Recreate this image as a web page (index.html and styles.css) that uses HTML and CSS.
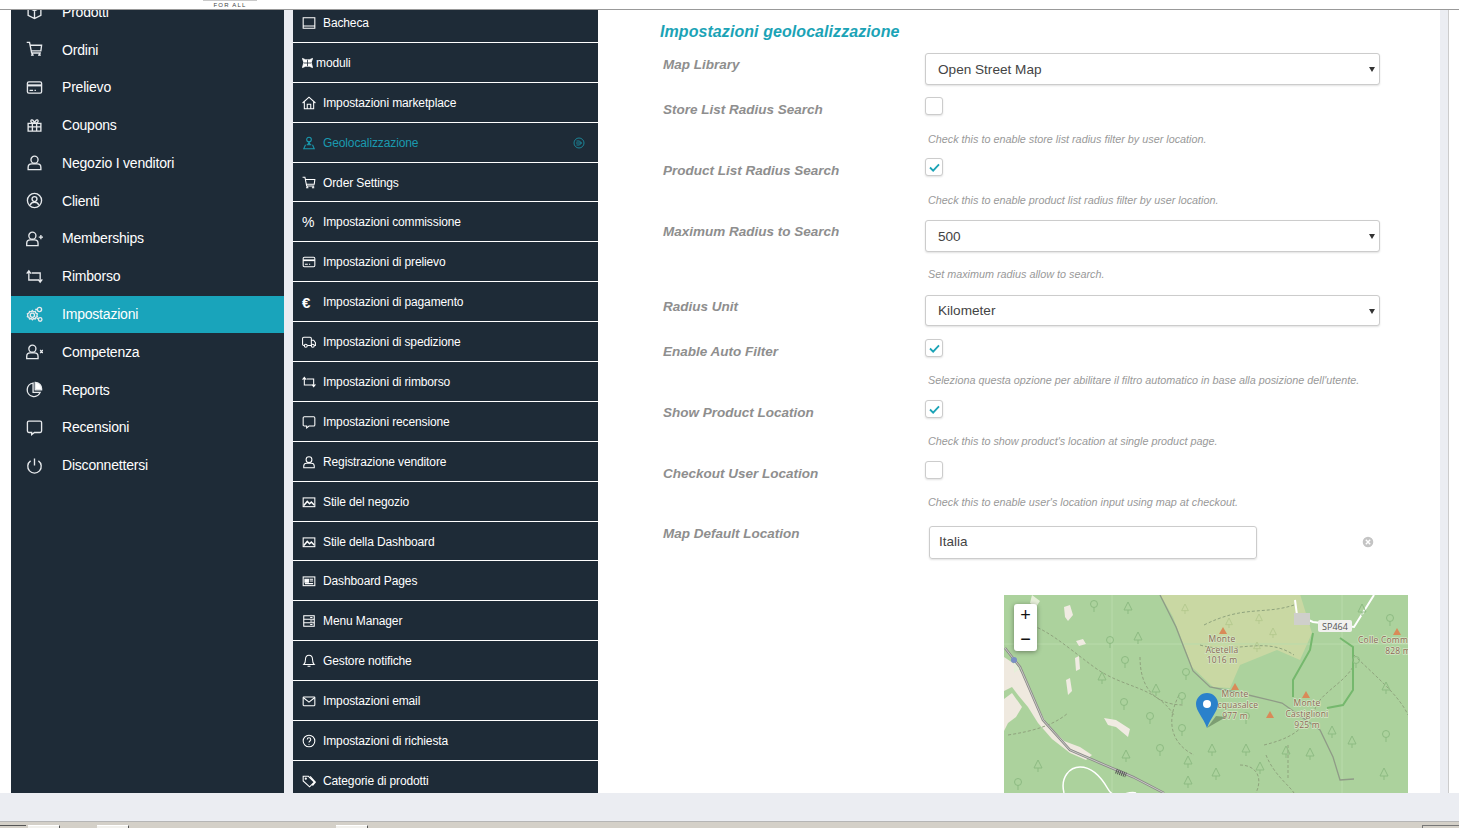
FILE: index.html
```html
<!DOCTYPE html>
<html lang="it">
<head>
  <meta charset="UTF-8" />
  <title>Impostazioni geolocalizzazione</title>
  <link rel="stylesheet" href="styles.css">
</head>
<body>

  <svg class="icon-defs" width="0" height="0">
    <defs>
      <symbol id="i-box" viewBox="0 0 24 24"><path d="M12 2l9 4.5v11L12 22l-9-4.5v-11zM3 6.5l9 4.5 9-4.5M12 11v11M7.5 4.2l9 4.5"/></symbol>
      <symbol id="i-cart" viewBox="0 0 24 24"><path d="M1 2h4l3 15h13M6 6h16l-1 8H7.5M9 17v3M19 17v3"/><path d="M7 20h4M17 20h4"/></symbol>
      <symbol id="i-card" viewBox="0 0 24 24"><rect x="2" y="4" width="20" height="16" rx="2"/><path d="M2 9h20" stroke-width="3"/><path d="M5 16h5M12 16h2"/></symbol>
      <symbol id="i-gift" viewBox="0 0 24 24"><path d="M3 9h18v11H3zM3 14h18M9 9v11M15 9v11M12 9C9 9 6 7 7 5s4-1 5 4c1-5 4-6 5-4s-2 4-5 4"/></symbol>
      <symbol id="i-user" viewBox="0 0 24 24"><circle cx="12" cy="8" r="5"/><path d="M3 22v-3c0-3 2-5 5-5h8c3 0 5 2 5 5v3z"/></symbol>
      <symbol id="i-user-circle" viewBox="0 0 24 24"><circle cx="12" cy="12" r="10"/><circle cx="12" cy="10" r="3.5"/><path d="M6 18.500c1-3 3-4 6-4s5 1 6 4"/></symbol>
      <symbol id="i-user-plus" viewBox="0 0 24 24"><circle cx="9" cy="8" r="5"/><path d="M1 22v-3c0-3 2-5 5-5h6c3 0 5 2 5 5v3zM18 10h6M21 7v6"/></symbol>
      <symbol id="i-user-x" viewBox="0 0 24 24"><circle cx="9" cy="8" r="5"/><path d="M1 22v-3c0-3 2-5 5-5h6c3 0 5 2 5 5v3zM20 10l4 4M24 10l-4 4"/></symbol>
      <symbol id="i-repeat" viewBox="0 0 24 24"><path d="M1 8l3-4 3 4M4 4v13h14M23 16l-3 4-3-4M20 20V7H8"/></symbol>
      <symbol id="i-gears" viewBox="0 0 24 24"><circle cx="9" cy="13" r="3"/><path d="M9 6.500l1.500 1.700 2.500-.5.800 2.300 2.200 1-.6 2 .6 2-2.200 1-.8 2.300-2.500-.5L9 19.500l-1.500-1.700-2.500.5-.8-2.300-2.200-1 .6-2-.6-2 2.200-1 .8-2.300 2.500.5z"/><circle cx="19" cy="5" r="3"/><circle cx="20" cy="19" r="2.5"/><path d="M13 5h3M15 17l3 1"/></symbol>
      <symbol id="i-pie" viewBox="0 0 24 24"><path d="M10 3a9.5 9.5 0 1 0 10 13H10z"/><path d="M13 2a9 9 0 0 1 9 9v1.500H13z" fill="currentColor"/></symbol>
      <symbol id="i-chat" viewBox="0 0 24 24"><path d="M4 3h16a2 2 0 0 1 2 2v12a2 2 0 0 1-2 2h-8l-4 3v-3H4a2 2 0 0 1-2-2V5a2 2 0 0 1 2-2z"/></symbol>
      <symbol id="i-power" viewBox="0 0 24 24"><path d="M12 2v10M6.500 5.500a9.500 9.500 0 1 0 11 0"/></symbol>
      <symbol id="i-monitor" viewBox="0 0 24 24"><path d="M2 3h20v18H2zM2 17h20M15 21h7"/></symbol>
      <symbol id="i-modules" viewBox="0 0 24 24"><path d="M1 2l7 3h8l7-3-3 9 3 11-7-3H8l-7 3 3-11z" fill="currentColor"/><path d="M12 5v14M4 12h16" stroke="#1e2b37"/></symbol>
      <symbol id="i-home" viewBox="0 0 24 24"><path d="M1 12L12 2l11 10M4 10v12h16V10M9 22v-8h6v8"/></symbol>
      <symbol id="i-geo" viewBox="0 0 24 24"><circle cx="12" cy="6" r="4"/><path d="M12 10l-2 5M12 10l2 5M8 15h8M6 15l-3 7h18l-3-7"/></symbol>
      <symbol id="i-arrow-circle" viewBox="0 0 24 24"><circle cx="12" cy="12" r="10"/><path d="M6 12h11M13 8l4 4-4 4M7 8h6M7 16h6"/></symbol>
      <symbol id="i-truck" viewBox="0 0 24 24"><path d="M4 18H3a2 2 0 0 1-2-2V6a2 2 0 0 1 2-2h11a2 2 0 0 1 2 2v12H9M16 9h4l3 4v5h-2"/><circle cx="6.5" cy="18.500" r="2.5"/><circle cx="18.500" cy="18.500" r="2.5"/></symbol>
      <symbol id="i-image" viewBox="0 0 24 24"><rect x="2" y="5" width="20" height="15"/><path d="M3 18l6-7 4 4 3-3 5 5" stroke-width="2.5"/></symbol>
      <symbol id="i-id" viewBox="0 0 24 24"><rect x="2" y="5" width="20" height="15"/><path d="M5 9h6v5H5z" fill="currentColor"/><path d="M13 9h6M13 12h6M5 16.500h14"/></symbol>
      <symbol id="i-list" viewBox="0 0 24 24"><rect x="3" y="3" width="18" height="18"/><path d="M3 9h18M3 15h18M14 6h4M14 12h4M14 18h4"/></symbol>
      <symbol id="i-bell" viewBox="0 0 24 24"><path d="M12 2c-4 0-6 3-6 7 0 5-1 7-3 9h18c-2-2-3-4-3-9 0-4-2-7-6-7zM9.500 21h5"/></symbol>
      <symbol id="i-mail" viewBox="0 0 24 24"><rect x="2" y="5" width="20" height="15" rx="1"/><path d="M2 6l10 8 10-8"/></symbol>
      <symbol id="i-help" viewBox="0 0 24 24"><circle cx="12" cy="12" r="10"/><path d="M9 9.500c0-4 6-4 6 0 0 2.500-3 2.500-3 5M12 17v1.500"/></symbol>
      <symbol id="i-tags" viewBox="0 0 24 24"><path d="M2 4h9l10 10-8 8L2 12zM14 4l9 10-5 6"/><circle cx="6.5" cy="8" r="1"/></symbol>
      <symbol id="i-tree" viewBox="0 0 12 14"><path d="M6 1l4 8H2zM6 9v4"/></symbol>
      <symbol id="i-round-tree" viewBox="0 0 12 14"><circle cx="6" cy="5" r="3.5"/><path d="M6 8.500V13"/></symbol>
      <symbol id="i-peak" viewBox="0 0 8 7"><path d="M4 0l4 7H0z"/></symbol>
    </defs>
  </svg>

  <header class="topbar">
    <div class="logo"><span class="logo-cut"></span><span class="logo-text">FOR ALL</span></div>
  </header>

  <div class="main">
    <!-- Main menu -->
    <nav class="sidebar">
      <ul class="side-list">
        <li><svg class="side-icon"><use href="#i-box"/></svg>Prodotti</li>
        <li><svg class="side-icon"><use href="#i-cart"/></svg>Ordini</li>
        <li><svg class="side-icon"><use href="#i-card"/></svg>Prelievo</li>
        <li><svg class="side-icon"><use href="#i-gift"/></svg>Coupons</li>
        <li><svg class="side-icon"><use href="#i-user"/></svg>Negozio I venditori</li>
        <li><svg class="side-icon"><use href="#i-user-circle"/></svg>Clienti</li>
        <li><svg class="side-icon"><use href="#i-user-plus"/></svg>Memberships</li>
        <li><svg class="side-icon"><use href="#i-repeat"/></svg>Rimborso</li>
        <li class="active"><svg class="side-icon"><use href="#i-gears"/></svg>Impostazioni</li>
        <li><svg class="side-icon"><use href="#i-user-x"/></svg>Competenza</li>
        <li><svg class="side-icon"><use href="#i-pie"/></svg>Reports</li>
        <li><svg class="side-icon"><use href="#i-chat"/></svg>Recensioni</li>
        <li><svg class="side-icon"><use href="#i-power"/></svg>Disconnettersi</li>
      </ul>
    </nav>

    <!-- Settings menu -->
    <nav class="submenu">
      <ul class="sub-list">
        <li><svg class="sub-icon"><use href="#i-monitor"/></svg>Bacheca</li>
        <li class="narrow"><svg class="sub-icon"><use href="#i-modules"/></svg>moduli</li>
        <li><svg class="sub-icon"><use href="#i-home"/></svg>Impostazioni marketplace</li>
        <li class="current"><svg class="sub-icon"><use href="#i-geo"/></svg>Geolocalizzazione<svg class="sub-arrow"><use href="#i-arrow-circle"/></svg></li>
        <li><svg class="sub-icon"><use href="#i-cart"/></svg>Order Settings</li>
        <li><span class="sub-glyph">%</span>Impostazioni commissione</li>
        <li><svg class="sub-icon"><use href="#i-card"/></svg>Impostazioni di prelievo</li>
        <li><span class="sub-glyph euro">€</span>Impostazioni di pagamento</li>
        <li><svg class="sub-icon"><use href="#i-truck"/></svg>Impostazioni di spedizione</li>
        <li><svg class="sub-icon"><use href="#i-repeat"/></svg>Impostazioni di rimborso</li>
        <li><svg class="sub-icon"><use href="#i-chat"/></svg>Impostazioni recensione</li>
        <li><svg class="sub-icon"><use href="#i-user"/></svg>Registrazione venditore</li>
        <li><svg class="sub-icon"><use href="#i-image"/></svg>Stile del negozio</li>
        <li><svg class="sub-icon"><use href="#i-image"/></svg>Stile della Dashboard</li>
        <li><svg class="sub-icon"><use href="#i-id"/></svg>Dashboard Pages</li>
        <li><svg class="sub-icon"><use href="#i-list"/></svg>Menu Manager</li>
        <li><svg class="sub-icon"><use href="#i-bell"/></svg>Gestore notifiche</li>
        <li><svg class="sub-icon"><use href="#i-mail"/></svg>Impostazioni email</li>
        <li><svg class="sub-icon"><use href="#i-help"/></svg>Impostazioni di richiesta</li>
        <li><svg class="sub-icon"><use href="#i-tags"/></svg>Categorie di prodotti</li>
      </ul>
    </nav>

    <main class="content">
      <h2 class="title">Impostazioni geolocalizzazione</h2>

      <div class="field h-44">
        <div class="field-label">Map Library</div>
        <div class="select">Open Street Map</div>
      </div>

      <div class="field h-61">
        <div class="field-label on-check">Store List Radius Search</div>
        <div>
          <span class="check"></span>
          <p class="help">Check this to enable store list radius filter by user location.</p>
        </div>
      </div>

      <div class="field h-62">
        <div class="field-label on-check">Product List Radius Search</div>
        <div>
          <span class="check"><svg class="tick" viewBox="0 0 12 10"><path d="M1 5l3.500 3.500L11 1.500"/></svg></span>
          <p class="help">Check this to enable product list radius filter by user location.</p>
        </div>
      </div>

      <div class="field h-75">
        <div class="field-label">Maximum Radius to Search</div>
        <div>
          <div class="select">500</div>
          <p class="help after-select">Set maximum radius allow to search.</p>
        </div>
      </div>

      <div class="field h-44">
        <div class="field-label">Radius Unit</div>
        <div class="select short">Kilometer</div>
      </div>

      <div class="field h-61">
        <div class="field-label on-check">Enable Auto Filter</div>
        <div>
          <span class="check"><svg class="tick" viewBox="0 0 12 10"><path d="M1 5l3.500 3.500L11 1.500"/></svg></span>
          <p class="help tight">Seleziona questa opzione per abilitare il filtro automatico in base alla posizione dell'utente.</p>
        </div>
      </div>

      <div class="field h-61">
        <div class="field-label on-check">Show Product Location</div>
        <div>
          <span class="check"><svg class="tick" viewBox="0 0 12 10"><path d="M1 5l3.500 3.500L11 1.500"/></svg></span>
          <p class="help tight">Check this to show product's location at single product page.</p>
        </div>
      </div>

      <div class="field h-65">
        <div class="field-label on-check">Checkout User Location</div>
        <div>
          <span class="check"></span>
          <p class="help tight">Check this to enable user's location input using map at checkout.</p>
        </div>
      </div>

      <div class="field h-69">
        <div class="field-label on-input">Map Default Location</div>
        <div class="location-row">
          <div class="text-input">Italia</div>
          <svg class="clear" viewBox="0 0 12 12"><circle cx="6" cy="6" r="6"/><path d="M3.800 3.800l4.400 4.400M8.200 3.800L3.800 8.200"/></svg>
        </div>
      </div>

      <!-- Map preview -->
      <div class="map">
        <svg class="map-tiles" viewBox="0 0 404 198">
          <rect width="404" height="198" fill="#acd29d"/>
          <path d="M156-1L296-1 308 38 296 65 273 55 236 70 226 93 209 92 188 72 169 22z" fill="#c9d8a3"/>
          <path d="M108 0V198M338 0V198M0 49H404" stroke="#b9dbab" fill="none"/>

          <!-- built up patches on the left -->
          <path d="M0 62L12 70 22 84 30 104 42 128 60 146 76 152 88 160 82 165 66 158 48 144 34 128 24 112 14 100 8 92 0 96z" fill="#efe9df"/>
          <path d="M0 104L8 98 18 112 12 122 4 128 0 136z" fill="#efe9df"/>
          <path d="M60 12L66 10 69 20 64 26 61 22zM72 46L79 44 82 49 75 51zM71 63L75 61 76 74 72 76zM62 85L66 83 68 96 64 100zM100 123L112 125 126 134 124 142 112 132 104 130z" fill="#f0ebe2"/>
          <path d="M28 0L36 6 32 12 26 8zM10 66L16 74 10 78z" fill="#e6efd9"/>

          <!-- trails -->
          <g fill="none" stroke="#8fa37d" stroke-width="1" stroke-dasharray="3 2">
            <path d="M10 25C40 30 60 50 90 72S150 90 170 120"/>
            <path d="M136 62C136 90 148 110 180 110M175 100C160 130 170 150 190 160"/>
            <path d="M200 30C240 10 260 20 290 10M196 50C230 60 260 40 290 60"/>
            <path d="M260 150C280 145 290 140 300 130M262 160C270 180 285 190 290 198M310 120C310 100 340 90 350 70"/>
            <path d="M350 60C370 80 395 100 404 120M236 170C250 170 260 180 252 198"/>
            <path d="M4 140C30 136 50 130 64 118M284 150V185"/>
          </g>

          <!-- roads and rail -->
          <path d="M60 198C56 182 66 172 76 172S96 180 104 194 124 194 132 198" fill="none" stroke="#fff" stroke-width="1.500"/>
          <path d="M1 53L16 72 29 102 39 125 66 155 96 168 129 182 160 198" fill="none" stroke="#8a8a88" stroke-width="2.500"/>
          <path d="M1 53L16 72 29 102 39 125 66 155 96 168 129 182 160 198" fill="none" stroke="#d8d8d4" stroke-width=".8"/>
          <path d="M112 176L122 180" fill="none" stroke="#555" stroke-width="5" stroke-dasharray="1 1"/>
          <path d="M156 0L172 32 189 76 206 92 236 98 278 108 316 135 329 162 336 185 350 184" fill="none" stroke="#8f9b87" stroke-width="1.300"/>
          <path d="M309 38L306 55 289 85 289 102M336 43L349 52 349 95 339 110 323 113" fill="none" stroke="#75b86d" stroke-width="2"/>
          <path d="M291 5L293 20 309 27 350 32 370 0" fill="none" stroke="#fff" stroke-width="2"/>
          <rect x="290" y="18" width="16" height="12" fill="#cfcfcb"/>

          <!-- forest symbols -->
          <g fill="none" stroke="#8dbb82" stroke-width="1">
            <use href="#i-round-tree" x="84" y="4" width="12" height="14"/>
            <use href="#i-tree" x="118" y="6" width="12" height="14"/>
            <use href="#i-round-tree" x="100" y="40" width="12" height="14"/>
            <use href="#i-tree" x="128" y="36" width="12" height="14"/>
            <use href="#i-round-tree" x="115" y="60" width="12" height="14"/>
            <use href="#i-tree" x="92" y="76" width="12" height="14"/>
            <use href="#i-round-tree" x="176" y="72" width="12" height="14"/>
            <use href="#i-tree" x="146" y="88" width="12" height="14"/>
            <use href="#i-round-tree" x="172" y="96" width="12" height="14"/>
            <use href="#i-round-tree" x="114" y="102" width="12" height="14"/>
            <use href="#i-round-tree" x="140" y="116" width="12" height="14"/>
            <use href="#i-round-tree" x="172" y="128" width="12" height="14"/>
            <use href="#i-round-tree" x="150" y="148" width="12" height="14"/>
            <use href="#i-tree" x="178" y="160" width="12" height="14"/>
            <use href="#i-tree" x="202" y="148" width="12" height="14"/>
            <use href="#i-tree" x="236" y="148" width="12" height="14"/>
            <use href="#i-tree" x="276" y="150" width="12" height="14"/>
            <use href="#i-tree" x="300" y="152" width="12" height="14"/>
            <use href="#i-tree" x="206" y="172" width="12" height="14"/>
            <use href="#i-tree" x="250" y="166" width="12" height="14"/>
            <use href="#i-tree" x="28" y="164" width="12" height="14"/>
            <use href="#i-tree" x="116" y="154" width="12" height="14"/>
            <use href="#i-round-tree" x="8" y="182" width="12" height="14"/>
            <use href="#i-tree" x="178" y="180" width="12" height="14"/>
            <use href="#i-round-tree" x="236" y="116" width="12" height="14"/>
            <use href="#i-round-tree" x="376" y="134" width="12" height="14"/>
            <use href="#i-tree" x="342" y="140" width="12" height="14"/>
            <use href="#i-tree" x="374" y="172" width="12" height="14"/>
            <use href="#i-round-tree" x="380" y="18" width="12" height="14"/>
            <use href="#i-tree" x="352" y="8" width="12" height="14"/>
            <use href="#i-round-tree" x="346" y="60" width="12" height="14"/>
            <use href="#i-tree" x="376" y="86" width="12" height="14"/>
            <use href="#i-tree" x="322" y="130" width="12" height="14"/>
            <use href="#i-round-tree" x="20" y="26" width="12" height="14"/>
          </g>
          <g fill="none" stroke="#b1c78b" stroke-width="1">
            <use href="#i-tree" x="176" y="8" width="10" height="12"/>
            <use href="#i-tree" x="220" y="22" width="10" height="12"/>
            <use href="#i-tree" x="250" y="18" width="10" height="12"/>
            <use href="#i-tree" x="264" y="32" width="10" height="12"/>
            <use href="#i-tree" x="248" y="46" width="10" height="12"/>
          </g>

          <!-- peaks -->
          <g fill="#d98a58">
            <use href="#i-peak" x="215" y="32" width="8" height="7"/>
            <use href="#i-peak" x="227" y="88" width="8" height="7"/>
            <use href="#i-peak" x="262" y="116" width="8" height="7"/>
            <use href="#i-peak" x="298" y="96" width="8" height="7"/>
            <use href="#i-peak" x="389" y="33" width="8" height="7"/>
          </g>
          <circle cx="10" cy="65" r="3" fill="#7a8fc4"/>

          <!-- labels -->
          <g class="map-label">
            <text x="218" y="47">Monte</text>
            <text x="218" y="58">Acetella</text>
            <text x="218" y="68">1016 m</text>
            <text x="231" y="102">Monte</text>
            <text x="231" y="113">Acquasalce</text>
            <text x="231" y="124">977 m</text>
            <text x="303" y="111">Monte</text>
            <text x="303" y="122">Castiglioni</text>
            <text x="303" y="133">925 m</text>
            <text x="379" y="48">Colle Comm</text>
            <text x="394" y="59">828 m</text>
          </g>
          <rect x="314" y="25" width="34" height="12" rx="2" fill="#f1f1ee"/>
          <text class="map-ref" x="331" y="34.500">SP464</text>

          <!-- marker -->
          <path d="M203 133L222 122 212 121z" fill="#5c7a55" opacity=".6"/>
          <path d="M203 133C199 122 192 116 192 109a11 11 0 0 1 22 0C214 116 207 122 203 133z" fill="#2a81cb"/>
          <circle cx="203" cy="109" r="4" fill="#fff"/>
        </svg>
        <div class="zoom-box">
          <span class="zoom-btn">+</span>
          <span class="zoom-btn">−</span>
        </div>
      </div>
    </main>

    <div class="gutter"></div>
    <div class="edge"></div>
  </div>

  <div class="page-foot"></div>
  <div class="taskbar">
    <span class="tab first"></span>
    <span class="tab"></span>
    <span class="tab gap-37"></span>
    <span class="tab gap-207"></span>
    <span class="tab last"></span>
  </div>

</body>
</html>
```

FILE: styles.css
```css
* {
  box-sizing: border-box;
}

html, body {
  height: 100%;
}

body {
  margin: 0;
  display: flex;
  flex-direction: column;
  overflow: hidden;
  background: #ebedf2;
  font-family: "Liberation Sans", Arial, sans-serif;
}

ul {
  list-style: none;
  margin: 0;
  padding: 0;
}

.icon-defs {
  position: absolute;
}

/* Top bar */
.topbar {
  height: 10px;
  flex: none;
  background: #fff;
  border-bottom: 1px solid #999;
  overflow: hidden;
  padding-left: 203px;
}

.logo {
  width: 54px;
  display: flex;
  flex-direction: column;
  align-items: center;
}

.logo-cut {
  width: 54px;
  height: 1px;
  background: #c9c9c9;
}

.logo-text {
  font-size: 6px;
  line-height: 8px;
  letter-spacing: 1.2px;
  color: #444;
}

.main {
  flex: none;
  height: 783px;
  display: flex;
  padding-left: 11px;
  background: linear-gradient(to right, #fff 11px, #ebedf2 11px);
}

/* Main menu */
.sidebar {
  width: 273px;
  flex: none;
  margin-right: 9px;
  background: #1e2b37;
  overflow: hidden;
}

.side-list {
  margin-top: -16.7px;
}

.side-list li {
  height: 37.8px;
  display: flex;
  align-items: center;
  padding: 0 0 1px 15px;
  color: #fff;
  font-size: 14px;
  letter-spacing: -0.2px;
}

.side-list li.active {
  background: #19a4bb;
}

.side-icon {
  width: 17px;
  height: 17px;
  margin-right: 19px;
  flex: none;
  fill: none;
  stroke: #e6e9ec;
  stroke-width: 1.9;
}

/* Settings menu */
.submenu {
  width: 305px;
  flex: none;
  background: #1e2b37;
  overflow: hidden;
}

.sub-list {
  margin-top: -7px;
}

.sub-list li {
  height: 39.9px;
  display: flex;
  align-items: center;
  padding: 1px 13px 0 9px;
  border-bottom: 1px solid #fff;
  color: #fff;
  font-size: 12px;
  letter-spacing: -0.12px;
}

.sub-list li.current {
  color: #1a9aaf;
}

.sub-list li.narrow .sub-icon {
  width: 11px;
  margin-right: 3px;
}

.sub-icon {
  width: 14px;
  height: 14px;
  margin-right: 7px;
  flex: none;
  fill: none;
  stroke: currentColor;
  stroke-width: 1.8;
}

.sub-glyph {
  width: 14px;
  margin-right: 7px;
  flex: none;
  font-size: 14px;
}

.sub-glyph.euro {
  font-size: 15px;
  font-weight: bold;
}

.sub-arrow {
  width: 12px;
  height: 12px;
  margin-left: auto;
  fill: none;
  stroke: currentColor;
  stroke-width: 1.6;
}

/* Form */
.content {
  width: 842px;
  flex: none;
  background: #fff;
  padding: 12px 60px 0 62px;
  overflow: hidden;
}

.title {
  margin: 0 0 11px;
  font-size: 16px;
  line-height: 20px;
  letter-spacing: 0.07px;
  font-style: italic;
  font-weight: bold;
  color: #1ba3b6;
}

.field {
  display: grid;
  grid-template-columns: 262px 1fr;
  padding-left: 3px;
}

.h-44 { height: 44px; }
.h-61 { height: 61px; }
.h-62 { height: 62px; }
.h-65 { height: 65px; }
.h-69 { height: 69px; }
.h-75 { height: 75px; }

.field-label {
  padding-top: 4px;
  font-size: 13.5px;
  line-height: 16px;
  font-style: italic;
  font-weight: bold;
  color: #8e8e8e;
}

.field-label.on-check {
  padding-top: 5px;
}

.field-label.on-input {
  padding-top: 0;
}

.select {
  position: relative;
  height: 32px;
  padding-left: 12px;
  border: 1px solid #ccc;
  border-radius: 3px;
  box-shadow: 0 1px 2px rgba(0, 0, 0, 0.12);
  font-size: 13.6px;
  line-height: 31px;
  color: #444;
  background: #fff;
}

.select.short {
  height: 31px;
  line-height: 30px;
}

.select::after {
  content: "";
  position: absolute;
  right: 4px;
  top: 13px;
  border-left: 3px solid transparent;
  border-right: 3px solid transparent;
  border-top: 5px solid #333;
}

.check {
  display: flex;
  align-items: center;
  justify-content: center;
  width: 18px;
  height: 18px;
  border: 1px solid #ccc;
  border-radius: 3px;
  box-shadow: 0 1px 2px rgba(0, 0, 0, 0.12);
  background: #fff;
}

.tick {
  width: 11px;
  height: 9px;
  fill: none;
  stroke: #1ba3b6;
  stroke-width: 2;
}

.help {
  margin: 17px 0 0 3px;
  font-size: 10.8px;
  line-height: 14px;
  font-style: italic;
  color: #999;
  white-space: nowrap;
}

.help.after-select {
  margin-top: 15px;
}

.help.tight {
  margin-top: 16px;
}

.location-row {
  display: flex;
  align-items: flex-start;
  padding: 0 6px 0 4px;
}

.text-input {
  width: 328px;
  height: 33px;
  padding-left: 9px;
  border: 1px solid #ccc;
  border-radius: 3px;
  box-shadow: 0 1px 2px rgba(0, 0, 0, 0.12);
  font-size: 13.5px;
  line-height: 29px;
  color: #444;
}

.clear {
  width: 12px;
  height: 12px;
  margin: 10px 0 0 auto;
  fill: #c4c4c4;
  stroke: #fff;
  stroke-width: 1.4;
}

/* Map */
.map {
  position: relative;
  width: 404px;
  height: 198px;
  margin-left: 344px;
}

.map-tiles {
  display: block;
  width: 404px;
  height: 198px;
}

.map-label text {
  font-family: "Open Sans", sans-serif;
  font-size: 8.5px;
  letter-spacing: 0.2px;
  text-anchor: middle;
  fill: #8c6a55;
  stroke: #d4e6c6;
  stroke-width: 1.5px;
  paint-order: stroke;
}

.map-ref {
  font-family: "Open Sans", sans-serif;
  font-size: 9px;
  text-anchor: middle;
  fill: #555;
}

.zoom-box {
  position: absolute;
  left: 10px;
  top: 9px;
  width: 23px;
  height: 47px;
  display: flex;
  flex-direction: column;
  background: #fff;
  border-radius: 3px;
  box-shadow: 0 1px 5px rgba(0, 0, 0, 0.4);
}

.zoom-btn {
  flex: 1;
  text-align: center;
  font-size: 18px;
  line-height: 23px;
  color: #111;
}

.gutter {
  width: 9px;
  flex: none;
  background: #ebedf2;
  border-right: 1px solid #ccc;
}

.edge {
  flex: 1;
  background: #fff;
}

/* Bottom of the window */
.page-foot {
  height: 29px;
  flex: none;
  background: #ebedf2;
  border-bottom: 1px solid #b5b5b5;
}

.taskbar {
  flex: 1;
  display: flex;
  align-items: flex-end;
  background: #d4d0c8;
}

.tab {
  width: 32px;
  height: 3px;
  margin-left: 2px;
  background: #f2f1ed;
  border-top: 1px solid #fff;
  border-right: 1px solid #555;
}

.tab.first {
  width: 26px;
  margin-left: 0;
  background: #d4d0c8;
  border-top: 1px solid #555;
  border-right: 0;
}

.tab.gap-37 {
  margin-left: 37px;
}

.tab.gap-207 {
  margin-left: 207px;
}

.tab.last {
  width: 37px;
  margin-left: auto;
  background: #d4d0c8;
  border-top: 1px solid #777;
  border-left: 1px solid #777;
  border-right: 0;
}
```
